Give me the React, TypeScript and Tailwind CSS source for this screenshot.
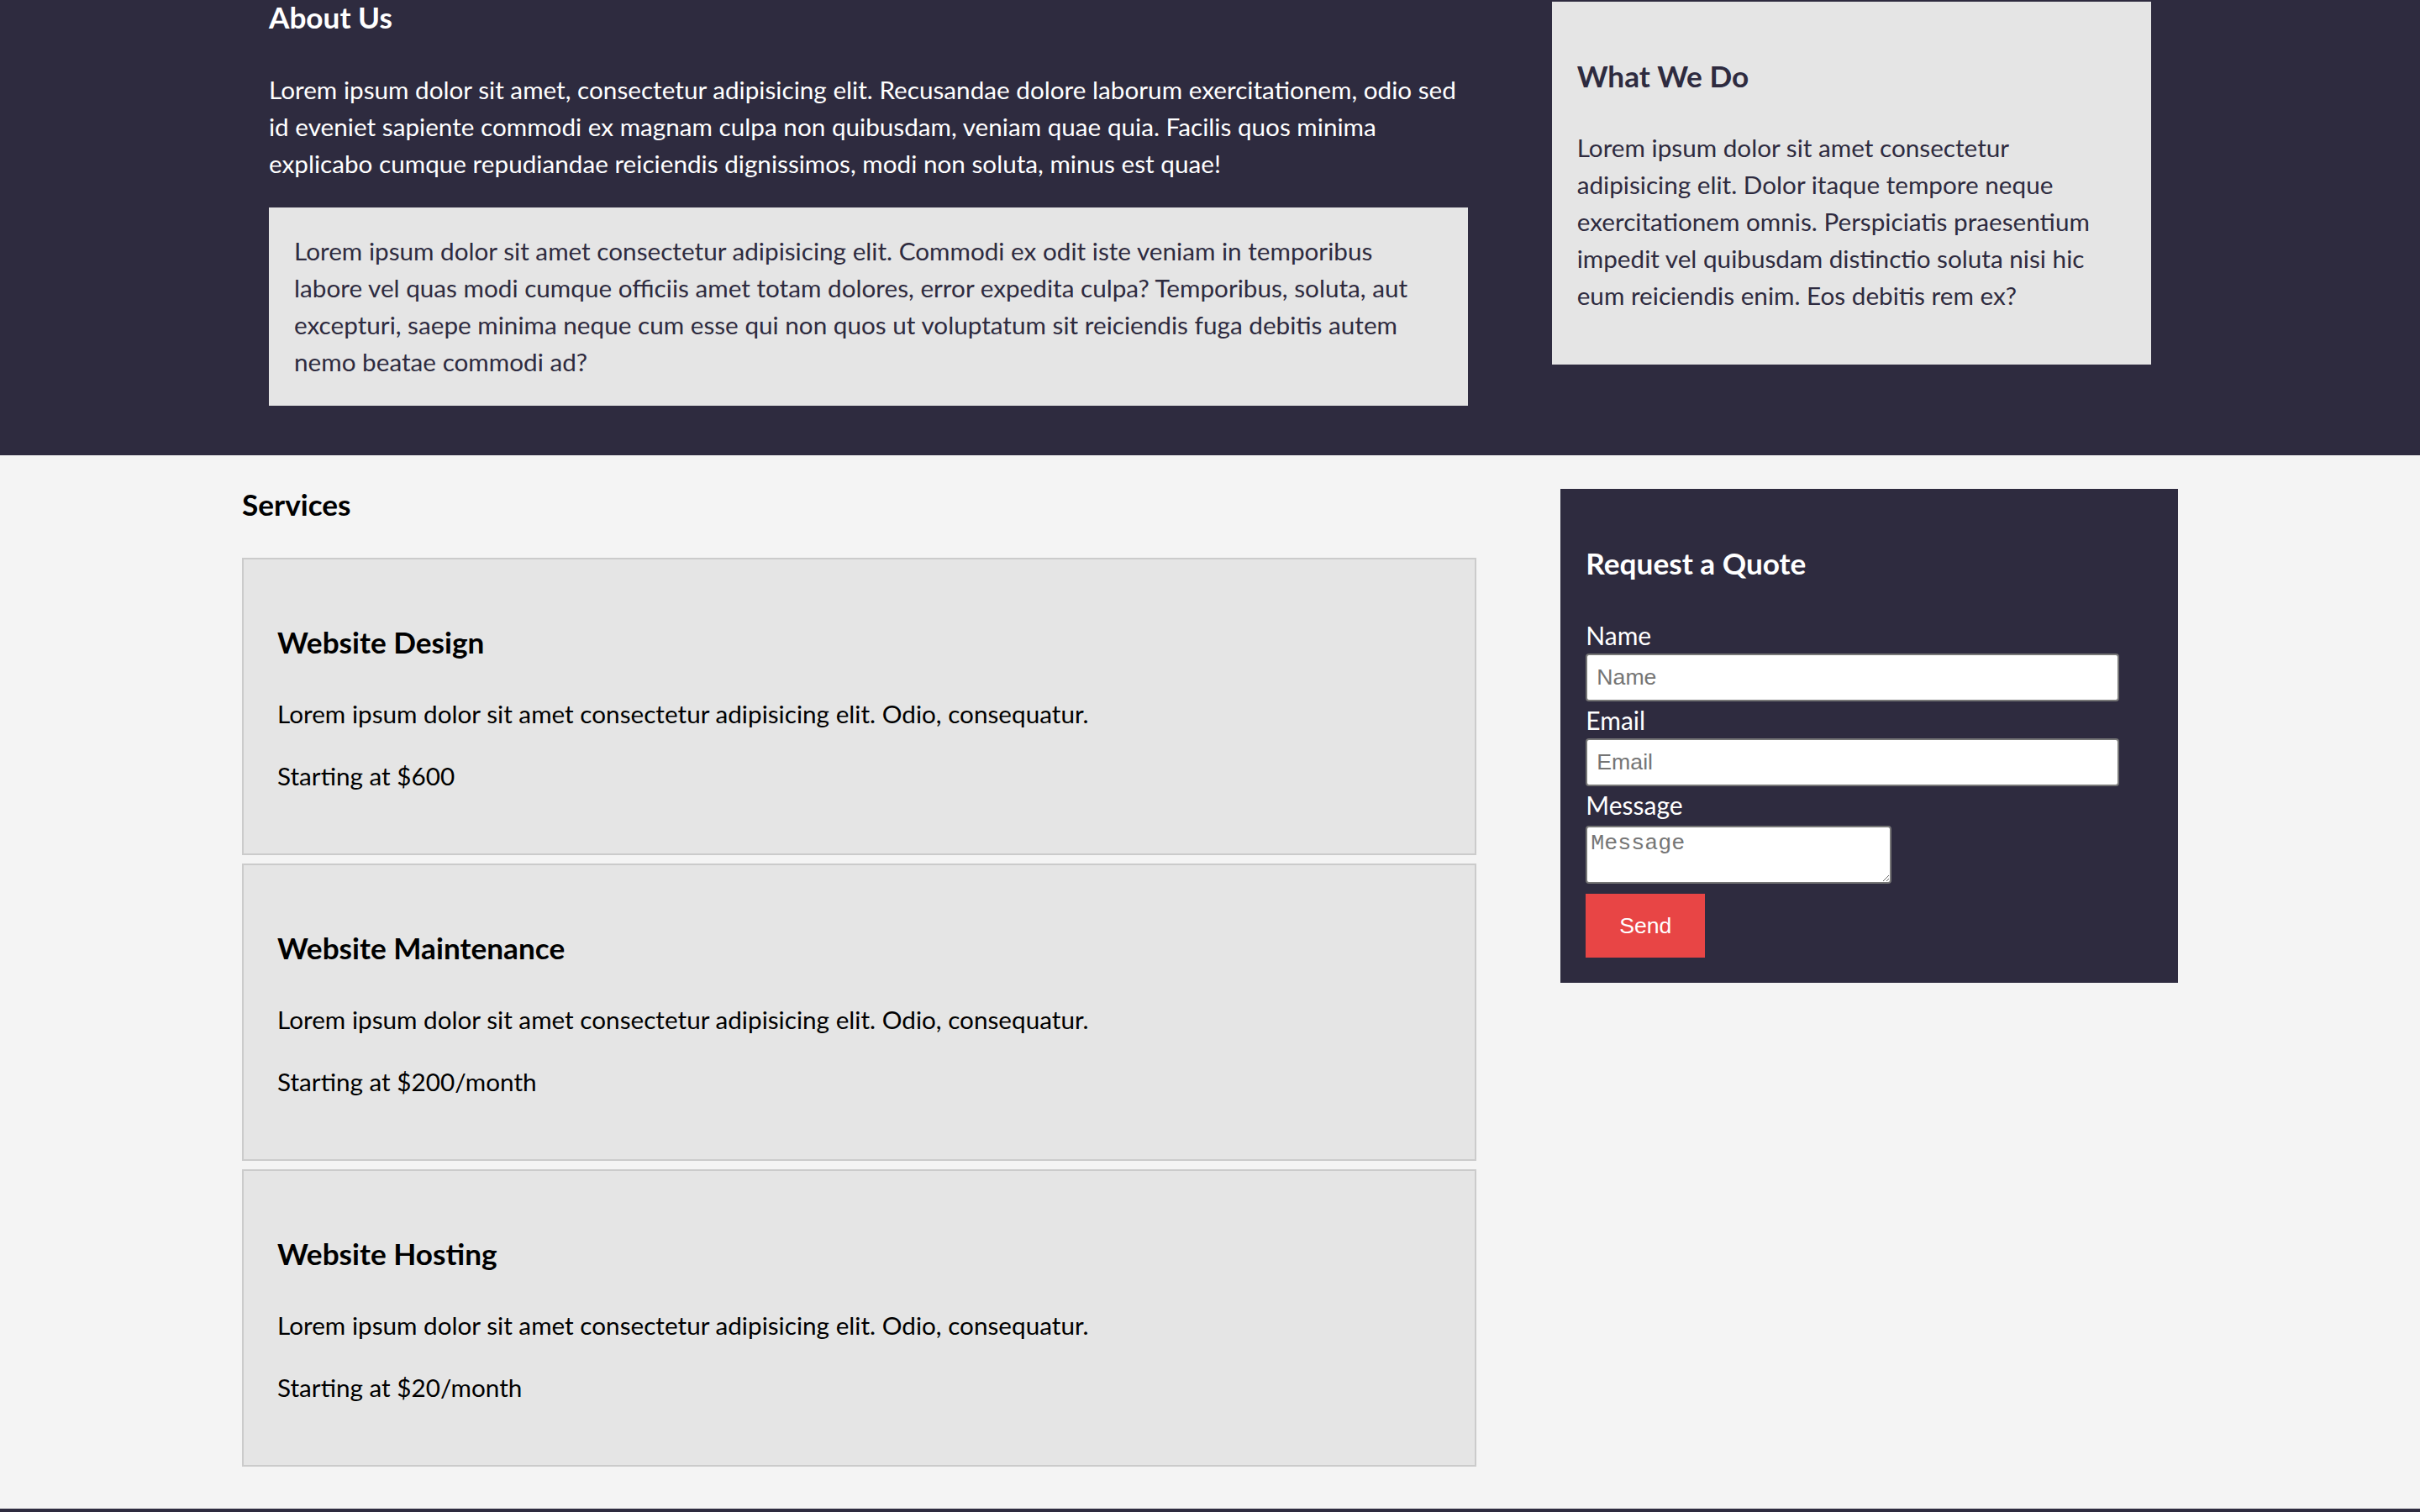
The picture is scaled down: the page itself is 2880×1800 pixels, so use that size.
import React from "react";

const services = [
  { title: "Website Design", price: "Starting at $600" },
  { title: "Website Maintenance", price: "Starting at $200/month" },
  { title: "Website Hosting", price: "Starting at $20/month" },
];

export default function App() {
  return (
    <div className="min-h-screen bg-[#f4f4f4] font-['Lato',sans-serif]">
      <section className="bg-[#2e2b3f] pb-[59px]">
        <div className="mx-auto grid w-[2304px] grid-cols-[2fr_1fr] items-start gap-[100px] px-[32px]">
          <div>
            <h3 className="text-[35.2px] font-bold leading-[40px] text-white">About Us</h3>
            <p className="mt-[45px] text-[29.7px] leading-[44px] text-white">
              Lorem ipsum dolor sit amet, consectetur adipisicing elit. Recusandae dolore laborum exercitationem, odio sed id eveniet sapiente commodi ex magnam culpa non quibusdam, veniam quae quia. Facilis quos minima explicabo cumque repudiandae reiciendis dignissimos, modi non soluta, minus est quae!
            </p>
            <div className="mt-[30px] bg-[#e5e5e5] p-[30px] text-[29.7px] leading-[44px] text-[#2e2b3f]">
              <p>
                Lorem ipsum dolor sit amet consectetur adipisicing elit. Commodi ex odit iste veniam in temporibus labore vel quas modi cumque officiis amet totam dolores, error expedita culpa? Temporibus, soluta, aut excepturi, saepe minima neque cum esse qui non quos ut voluptatum sit reiciendis fuga debitis autem nemo beatae commodi ad?
              </p>
            </div>
          </div>
          <div className="mt-[2px] bg-[#e5e5e5] p-[30px] text-[#2e2b3f]">
            <h3 className="mt-[38px] text-[35.2px] font-bold leading-[40px]">What We Do</h3>
            <p className="mb-[30px] mt-[44px] text-[29.7px] leading-[44px]">
              Lorem ipsum dolor sit amet consectetur adipisicing elit. Dolor itaque tempore neque exercitationem omnis. Perspiciatis praesentium impedit vel quibusdam distinctio soluta nisi hic eum reiciendis enim. Eos debitis rem ex?
            </p>
          </div>
        </div>
      </section>

      <section className="pb-[50px]">
        <div className="mx-auto grid w-[2304px] grid-cols-[2fr_1fr] items-start gap-[100px]">
          <div>
            <h3 className="mb-[44px] mt-[38px] text-[35.2px] font-bold leading-[40px] text-black">Services</h3>
            <div className="flex flex-col gap-[10px]">
              {services.map((s) => (
                <div key={s.title} className="border-2 border-[#cbcbcb] bg-[#e5e5e5] p-[40px] text-black">
                  <h3 className="mt-[38px] text-[35.2px] font-bold leading-[40px]">{s.title}</h3>
                  <p className="mt-[44px] text-[29.7px] leading-[44px]">
                    Lorem ipsum dolor sit amet consectetur adipisicing elit. Odio, consequatur.
                  </p>
                  <p className="mb-[30px] mt-[30px] text-[29.7px] leading-[44px]">{s.price}</p>
                </div>
              ))}
            </div>
          </div>

          <div className="mt-[40px] bg-[#2e2b3f] p-[30px] text-white">
            <h3 className="mb-[44px] mt-[38px] text-[35.2px] font-bold leading-[40px]">Request a Quote</h3>
            <form className="flex flex-col items-start" onSubmit={(e) => e.preventDefault()}>
              <label className="block text-[30px] leading-[44px]">Name</label>
              <input
                type="text"
                placeholder="Name"
                className="box-border h-[57px] w-[635px] rounded-[4px] border-2 border-[#767676] bg-white pl-[11px] font-['Liberation_Sans',Arial,sans-serif] text-[26.67px] text-black placeholder:text-[#757575]"
              />
              <label className="block text-[30px] leading-[44px]">Email</label>
              <input
                type="email"
                placeholder="Email"
                className="box-border h-[57px] w-[635px] rounded-[4px] border-2 border-[#767676] bg-white pl-[11px] font-['Liberation_Sans',Arial,sans-serif] text-[26.67px] text-black placeholder:text-[#757575]"
              />
              <label className="block text-[30px] leading-[44px]">Message</label>
              <textarea
                placeholder="Message"
                className="mt-[3px] box-border h-[69px] w-[364px] resize rounded-[4px] border-2 border-[#767676] bg-white p-[4px] font-['Liberation_Mono','Courier_New',monospace] text-[26.67px] leading-[30px] text-black placeholder:text-[#757575]"
              />
              <button
                type="submit"
                className="mt-[12px] h-[76px] w-[142px] bg-[#e84545] font-['Liberation_Sans',Arial,sans-serif] text-[26.67px] text-white"
              >
                Send
              </button>
            </form>
          </div>
        </div>
      </section>

      <footer className="h-[80px] bg-[#2e2b3f]" />
    </div>
  );
}
